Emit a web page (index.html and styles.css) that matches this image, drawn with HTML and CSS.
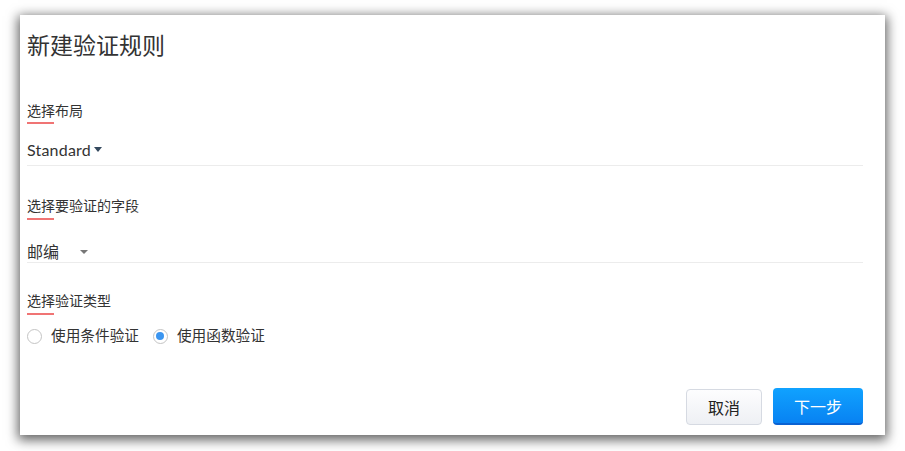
FILE: index.html
```html
<!DOCTYPE html>
<html lang="zh">
<head>
<meta charset="utf-8">
<title>新建验证规则</title>
<link rel="stylesheet" href="styles.css">
</head>
<body>
<div class="dialog">
  <h1 class="title">新建验证规则</h1>

  <div class="field field-layout">
    <div class="label">选择布局</div>
    <div class="select select-layout">
      <span class="value value-en">Standard</span>
      <span class="caret caret-dark"></span>
    </div>
  </div>

  <div class="field field-target">
    <div class="label">选择要验证的字段</div>
    <div class="select select-field">
      <span class="value value-cjk">邮编</span>
      <span class="caret caret-grey"></span>
    </div>
  </div>

  <div class="field field-type">
    <div class="label">选择验证类型</div>
    <div class="radios">
      <label class="radio"><span class="radio-dot"></span><span class="radio-text">使用条件验证</span></label>
      <label class="radio checked"><span class="radio-dot"></span><span class="radio-text">使用函数验证</span></label>
    </div>
  </div>

  <div class="actions">
    <button class="btn btn-cancel">取消</button>
    <button class="btn btn-next">下一步</button>
  </div>
</div>
</body>
</html>
```

FILE: styles.css
```css
* { box-sizing: border-box; }
html, body { margin: 0; padding: 0; background: #ffffff; }
body {
  font-family: Lato, "Noto Sans CJK SC", sans-serif;
  color: #333;
  padding: 15px 20px 16px 20px;
}
.dialog {
  width: 865px;
  height: 420px;
  background: #fff;
  box-shadow: 0 3px 11px 2px rgba(0,0,0,0.62);
  padding: 14px 22px 10px 7px;
  display: flex;
  flex-direction: column;
}
.title {
  margin: 0;
  font-weight: 400;
  font-size: 23px;
  line-height: 32px;
  color: #333;
}
.label {
  font-size: 14px;
  line-height: 20px;
  color: #333;
}
.label::after {
  content: "";
  display: block;
  width: 27px;
  height: 2px;
  margin-top: 1px;
  background: #f07474;
}
.field-layout { margin-top: 40px; }
.field-target { margin-top: 30px; }
.field-type { margin-top: 28px; }
.field-target .label::after, .field-type .label::after { margin-top: 2px; }

.select {
  display: flex;
  align-items: center;
  border-bottom: 1px solid #ececec;
}
.select-layout {
  margin-top: 14px;
  line-height: 24px;
  padding-bottom: 3px;
}
.select-field {
  margin-top: 22px;
  line-height: 20px;
}
.value { font-size: 16px; color: #333; }
.value-en { letter-spacing: 0.2px; }
.caret {
  width: 0; height: 0;
  border-left: 4px solid transparent;
  border-right: 4px solid transparent;
}
.caret-dark {
  border-top: 5px solid #34495e;
  margin-left: 3px;
  margin-top: -2px;
}
.caret-grey {
  border-left-width: 4.5px;
  border-right-width: 4.5px;
  border-top: 4px solid #777;
  margin-left: 21px;
}

.radios {
  margin-top: 11px;
  display: flex;
  align-items: center;
  gap: 14px;
  line-height: 20px;
}
.radio {
  display: flex;
  align-items: center;
  gap: 9px;
  font-size: 14.67px;
  color: #333;
}
.radio-dot {
  width: 15px; height: 15px;
  border-radius: 50%;
  border: 1px solid #c4c4c4;
  background: #fff;
  display: flex;
  align-items: center;
  justify-content: center;
}
.radio.checked .radio-dot::after {
  content: "";
  width: 8px; height: 8px;
  border-radius: 50%;
  background: #3b95f0;
}

.actions {
  margin-top: auto;
  display: flex;
  justify-content: flex-end;
  align-items: center;
  gap: 11px;
}
.btn {
  font-family: Lato, "Noto Sans CJK SC", sans-serif;
  font-size: 16px;
  border-radius: 4px;
  cursor: pointer;
  padding: 0;
}
.btn-cancel {
  width: 76px; height: 36px;
  background: linear-gradient(#fdfdfe, #eef0f4);
  border: 1px solid #d6dae2;
  color: #222;
}
.btn-next {
  width: 90px; height: 37px;
  background: linear-gradient(#10a2ff, #0882f2);
  border: none;
  border-bottom: 2px solid #0a62d2;
  color: #fff;
}
```
